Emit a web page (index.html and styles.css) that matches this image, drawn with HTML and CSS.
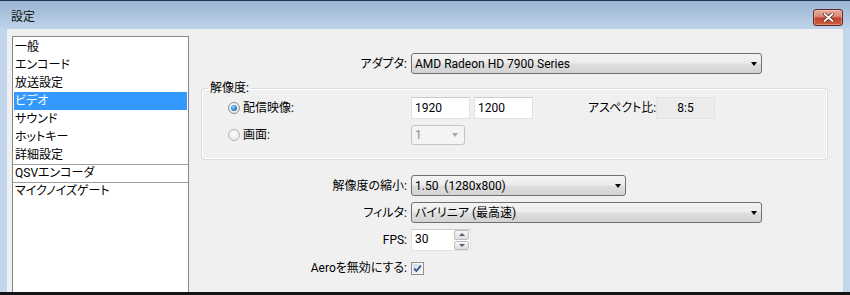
FILE: index.html
```html
<!DOCTYPE html>
<html lang="ja">
<head>
<meta charset="utf-8">
<title>設定</title>
<link rel="stylesheet" href="styles.css">
</head>
<body>
<div class="window">
  <div class="titlebar">
    <span class="title">設定</span>
    <div class="close">
      <svg width="11" height="9" viewBox="0 0 11 9">
        <path d="M1.5 1 L9.5 8 M9.5 1 L1.5 8" stroke="#5a2219" stroke-width="3.4" stroke-linecap="round"/>
        <path d="M1.5 1 L9.5 8 M9.5 1 L1.5 8" stroke="#ffffff" stroke-width="1.8" stroke-linecap="round"/>
      </svg>
    </div>
  </div>
  <div class="client">
    <ul class="nav">
      <li>一般</li>
      <li>エンコード</li>
      <li>放送設定</li>
      <li class="sel">ビデオ</li>
      <li>サウンド</li>
      <li>ホットキー</li>
      <li>詳細設定</li>
      <li class="sep">QSVエンコーダ</li>
      <li class="sep">マイクノイズゲート</li>
    </ul>
    <div class="panel">
      <div class="row">
        <span class="lbl">アダプタ:</span>
        <div class="combo w-wide"><span>AMD Radeon HD 7900 Series</span><i class="arrow"></i></div>
      </div>
      <fieldset class="group">
        <legend class="group-title">解像度:</legend>
        <div class="grow">
          <div class="opt"><span class="radio on"></span><span>配信映像:</span></div>
          <div class="edit">1920</div>
          <div class="edit ml4">1200</div>
          <div class="aspect-label">アスペクト比:</div>
          <div class="ro">8:5</div>
        </div>
        <div class="grow">
          <div class="opt"><span class="radio"></span><span>画面:</span></div>
          <div class="combo disabled w-small"><span>1</span><i class="arrow"></i></div>
        </div>
      </fieldset>
      <div class="row mt15">
        <span class="lbl">解像度の縮小:</span>
        <div class="combo w-mid"><span>1.50  (1280x800)</span><i class="arrow"></i></div>
      </div>
      <div class="row mt6">
        <span class="lbl">フィルタ:</span>
        <div class="combo w-wide"><span>バイリニア (最高速)</span><i class="arrow"></i></div>
      </div>
      <div class="row mt6">
        <span class="lbl">FPS:</span>
        <div class="spinbox">
          <span class="spintext">30</span>
          <div class="spinbtns">
            <div class="spinbtn"><i class="up"></i></div>
            <div class="spinbtn"><i class="down"></i></div>
          </div>
        </div>
      </div>
      <div class="row mt10">
        <span class="lbl">Aeroを無効にする:</span>
        <div class="check">
          <svg width="11" height="11" viewBox="0 0 11 11">
            <path d="M2.2 5.6 L4.4 8 L8.8 2.6" fill="none" stroke="#2b4f8c" stroke-width="1.7"/>
          </svg>
        </div>
      </div>
    </div>
  </div>
  <div class="bottom"></div>
</div>
</body>
</html>
```
FILE: styles.css
```css
body {
  margin: 0;
  background: #c3d7ec;
}

.window {
  width: 850px;
  height: 295px;
  display: flex;
  flex-direction: column;
  overflow: hidden;
  font-family: "Roboto", "Noto Sans CJK JP", sans-serif;
  font-size: 12px;
  color: #000;
  font-feature-settings: "palt" 1;
}

.titlebar {
  box-sizing: border-box;
  height: 29px;
  flex: none;
  border-top: 1px solid #23354a;
  background: linear-gradient(#9ab4d2, #bfd4ea);
  display: flex;
  justify-content: space-between;
  align-items: center;
  padding: 4px 7px 0 11px;
}

.title {
  line-height: 14px;
  color: #111;
}

.close {
  box-sizing: border-box;
  width: 30px;
  height: 17px;
  border: 1px solid #5c2a22;
  border-radius: 3px;
  background: linear-gradient(#e8a898 0%, #d98b78 42%, #c0432c 55%, #d15e40 100%);
  box-shadow: inset 0 0 0 1px rgba(255, 255, 255, 0.3);
  display: flex;
  align-items: center;
  justify-content: center;
}

.client {
  flex: 1;
  min-height: 0;
  display: flex;
  border-left: 7px solid #c3d7ec;
  border-right: 7px solid #c3d7ec;
  background: #f0f0f0;
}

.bottom {
  height: 3px;
  flex: none;
  background: #141414;
}

.nav {
  list-style: none;
  margin: 7px 0 0 5px;
  padding: 1px;
  width: 177px;
  flex: none;
  box-sizing: border-box;
  background: #fff;
  border: 1px solid #828790;
  border-bottom: none;
}

.nav li {
  height: 18px;
  line-height: 18px;
  padding-left: 1px;
  white-space: nowrap;
}

.nav li.sel {
  background: #3399ff;
  color: #fff;
}

.nav li.sep {
  border-top: 1px solid #a0a0a0;
  height: 17px;
  line-height: 17px;
  margin: 0 -1px;
  padding-left: 2px;
}

.panel {
  flex: 1;
  padding: 24px 15px 0 12px;
}

.row {
  display: grid;
  grid-template-columns: 206px max-content;
  column-gap: 4px;
  align-items: center;
}

.lbl {
  justify-self: end;
  white-space: nowrap;
  line-height: 14px;
}

.mt15 { margin-top: 15px; }
.mt6 { margin-top: 6px; }
.mt10 { margin-top: 10px; }
.ml4 { margin-left: 4px; }

.combo {
  box-sizing: border-box;
  height: 21px;
  border: 1px solid #707070;
  border-radius: 3px;
  background: linear-gradient(#f4f4f4 0%, #ebebeb 48%, #dedede 52%, #d3d3d3 100%);
  display: flex;
  align-items: center;
  justify-content: space-between;
  padding: 0 3px 0 3px;
  white-space: pre;
  line-height: 14px;
}

.w-wide { width: 351px; }
.w-mid { width: 215px; }
.w-small { width: 54px; height: 20px; }

.arrow {
  width: 0;
  height: 0;
  margin-right: 1px;
  border-left: 3.5px solid transparent;
  border-right: 3.5px solid transparent;
  border-top: 4px solid #000;
}

.combo.disabled {
  border-color: #c4c4c4;
  background: #f4f4f4;
  color: #8c8c8c;
  padding-right: 5px;
}

.combo.disabled .arrow {
  border-top-color: #a8a8a8;
}

.group {
  box-sizing: border-box;
  margin: 7px 0 0;
  min-width: 0;
  border: 1px solid #d5dfe5;
  border-radius: 3px;
  box-shadow: inset 0 0 0 1px #fff;
  padding: 2px 0 14px;
  display: flex;
  flex-direction: column;
  gap: 6px;
}

.group-title {
  margin-left: 6px;
  padding: 0 2px;
  line-height: 14px;
  height: 14px;
}

.grow {
  display: flex;
  align-items: center;
}

.opt {
  width: 209px;
  box-sizing: border-box;
  padding-left: 26px;
  display: flex;
  align-items: center;
  gap: 3px;
  line-height: 14px;
}

.radio {
  box-sizing: border-box;
  width: 12px;
  height: 12px;
  border-radius: 50%;
  border: 1px solid #b5b5b5;
  background: radial-gradient(circle at 50% 40%, #ffffff 0%, #e9e9e9 70%, #d6d6d6 100%);
  display: flex;
  align-items: center;
  justify-content: center;
}

.radio.on {
  border-color: #8e8f8f;
}

.radio.on::after {
  content: "";
  width: 6px;
  height: 6px;
  border-radius: 50%;
  background: radial-gradient(circle at 40% 35%, #9fd7ff 0%, #2a7fcf 55%, #1a4f86 100%);
}

.edit {
  box-sizing: border-box;
  width: 59px;
  height: 22px;
  background: #fff;
  border: 1px solid #dfe2e6;
  border-top-color: #c9ccd1;
  padding-left: 3px;
  display: flex;
  align-items: center;
  line-height: 14px;
}

.aspect-label {
  margin-left: 55px;
  width: 63px;
  text-align: right;
  white-space: nowrap;
  line-height: 14px;
}

.ro {
  box-sizing: border-box;
  margin-left: 5px;
  width: 59px;
  height: 22px;
  background: #ececec;
  border: 1px solid #e3e3e3;
  display: flex;
  align-items: center;
  justify-content: center;
  line-height: 14px;
}

.spinbox {
  box-sizing: border-box;
  width: 60px;
  height: 22px;
  background: #fff;
  border: 1px solid #dfe2e6;
  border-top-color: #c9ccd1;
  padding: 0 1px 0 3px;
  display: flex;
  justify-content: space-between;
}

.spintext {
  line-height: 14px;
  padding-top: 2px;
}

.spinbtns {
  width: 15px;
  display: flex;
  flex-direction: column;
  gap: 1px;
}

.spinbtn {
  flex: 1;
  box-sizing: border-box;
  border: 1px solid #bdbdbd;
  border-radius: 2px;
  background: linear-gradient(#f6f6f6, #dedede);
  display: flex;
  align-items: center;
  justify-content: center;
}

.up, .down {
  width: 0;
  height: 0;
  border-left: 3.5px solid transparent;
  border-right: 3.5px solid transparent;
}

.up { border-bottom: 3px solid #4f5d75; }
.down { border-top: 3px solid #4f5d75; }

.check {
  box-sizing: border-box;
  width: 13px;
  height: 13px;
  border: 1px solid #8f8f8f;
  background: linear-gradient(135deg, #d4dbe4 0%, #f4f6f9 100%);
  box-shadow: inset 0 0 0 1px #f6f6f6;
  display: flex;
  align-items: center;
  justify-content: center;
}
```
